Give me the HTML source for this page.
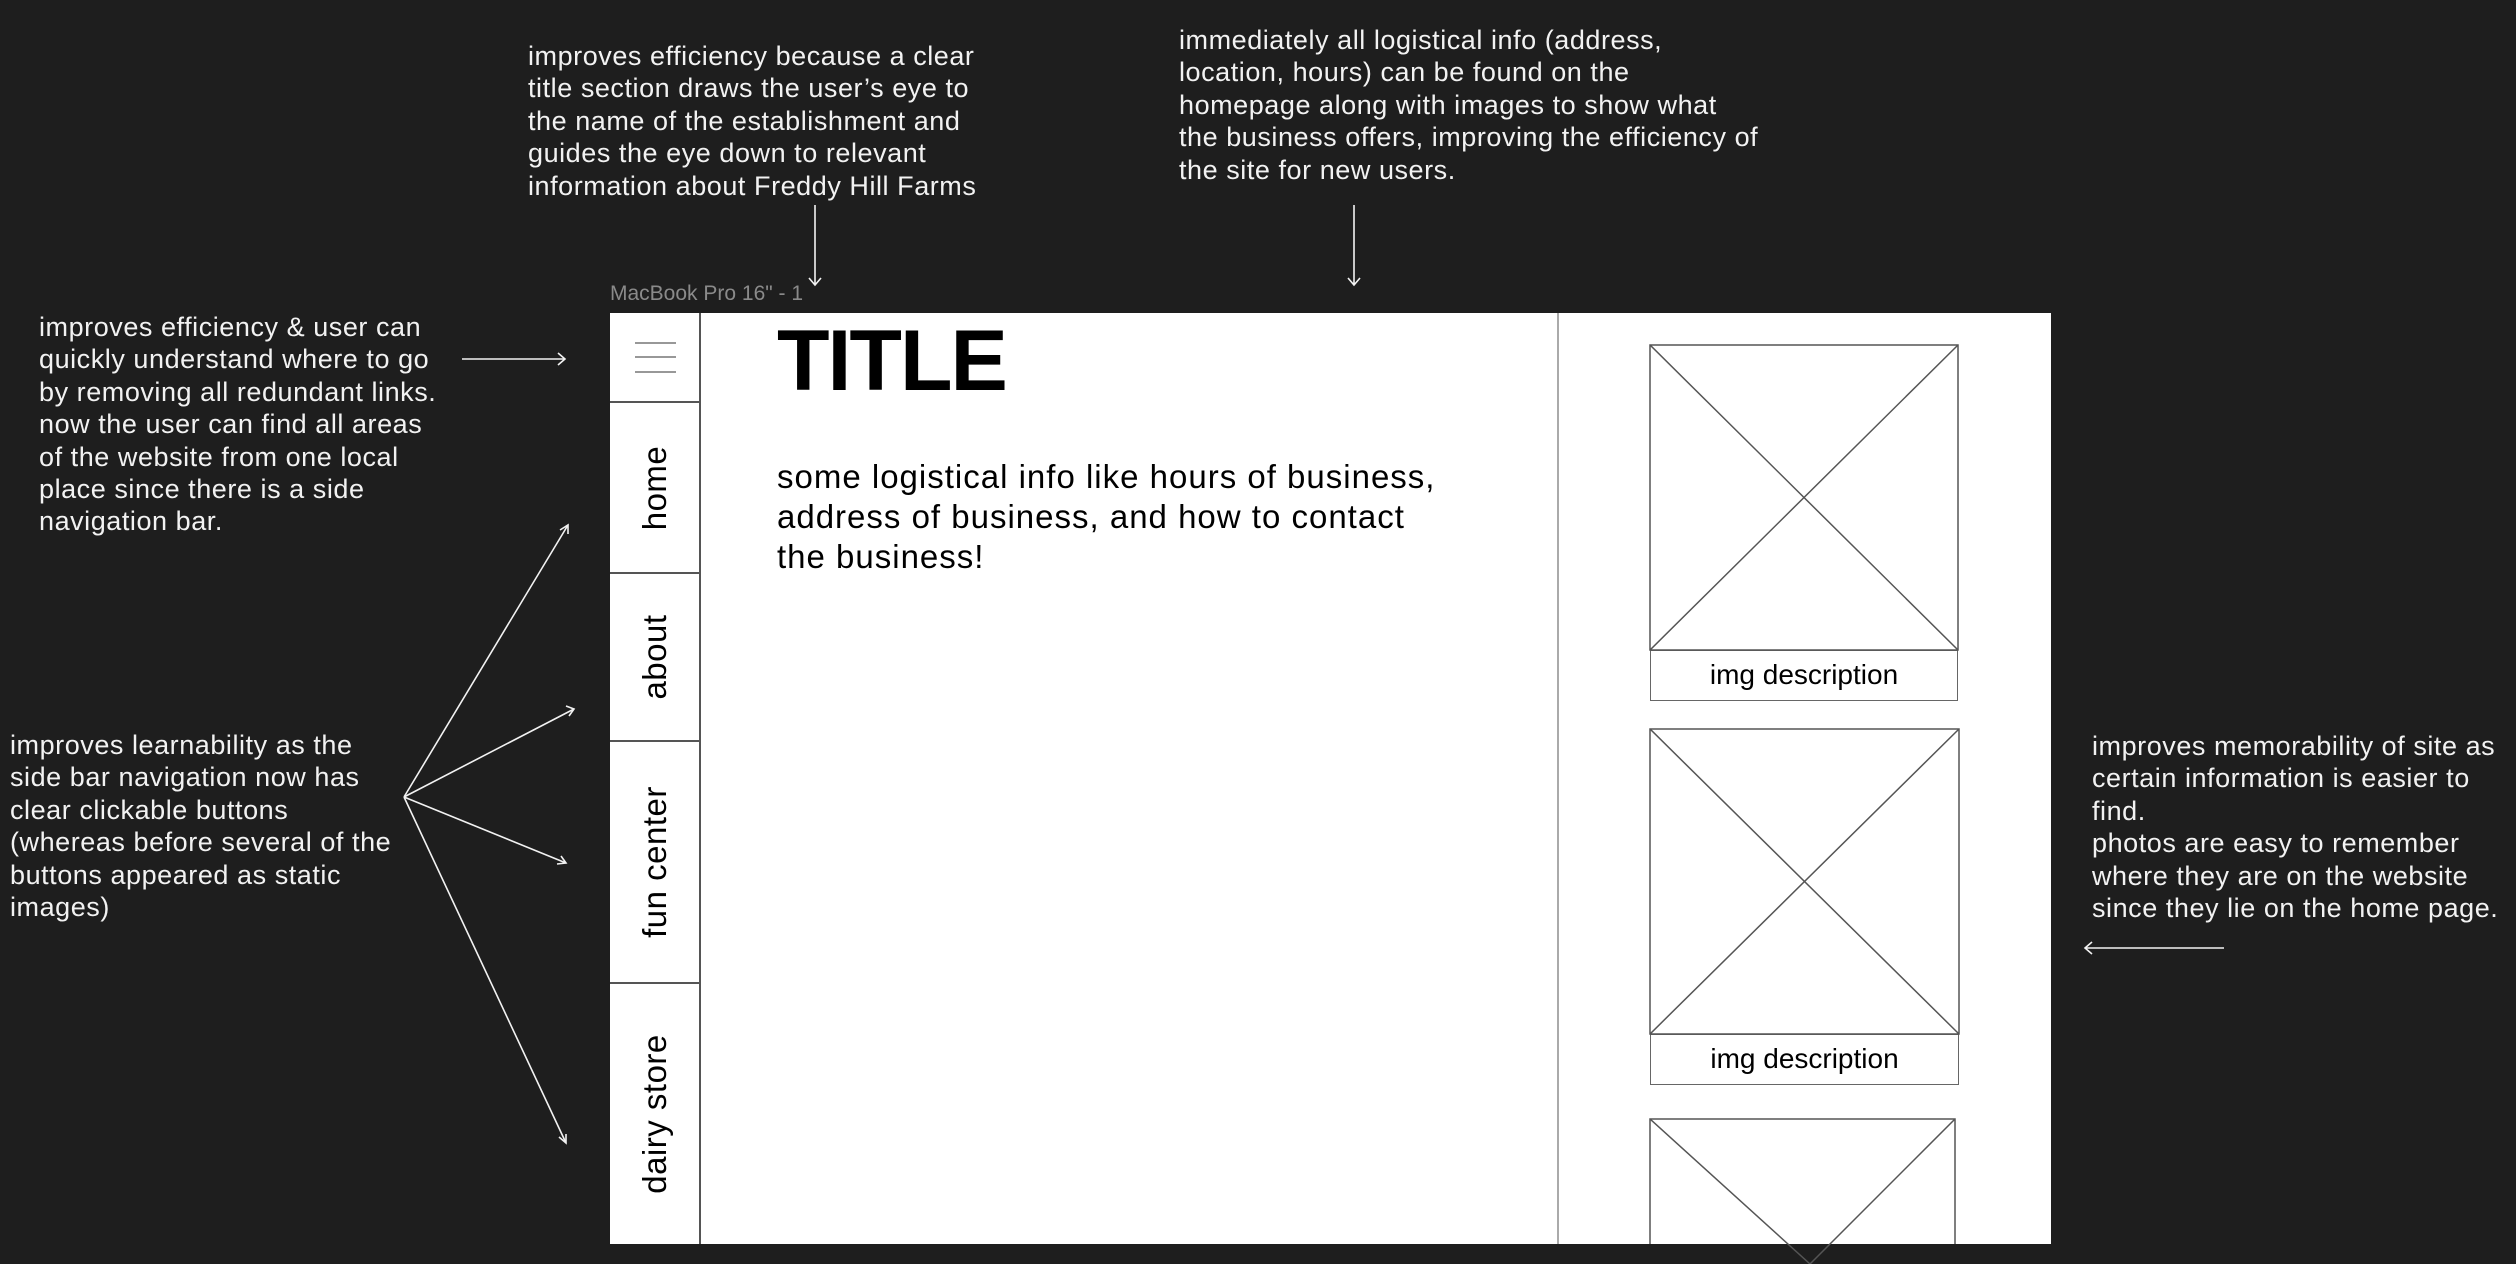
<!DOCTYPE html>
<html><head><meta charset="utf-8"><style>
html,body{margin:0;padding:0;background:#1e1e1e;width:2516px;height:1264px;overflow:hidden;position:relative;font-family:"Liberation Sans",sans-serif}
.a{position:absolute;color:#f2f2f2;font-size:27px;line-height:32.4px;white-space:nowrap;letter-spacing:0.55px}
.w{position:absolute;background:#fff}
.nav{position:absolute;left:610px;width:89px;background:#fff;border-bottom:2px solid #555;box-sizing:border-box}
.nav span{position:absolute;left:50%;top:50%;transform:translate(-50%,-50%) rotate(-90deg);font-size:33px;color:#000;white-space:nowrap;letter-spacing:0.5px}
.cap{position:absolute;border:1.5px solid #666;box-sizing:border-box;background:#fff;font-size:28px;text-align:center;color:#000}
</style></head><body>
<div class="a" style="left:528px;top:40px">improves efficiency because a clear<br>title section draws the user’s eye to<br>the name of the establishment and<br>guides the eye down to relevant<br>information about Freddy Hill Farms</div>
<div class="a" style="left:1179px;top:24px">immediately all logistical info (address,<br>location, hours) can be found on the<br>homepage along with images to show what<br>the business offers, improving the efficiency of<br>the site for new users.</div>
<div class="a" style="left:39px;top:311px">improves efficiency &amp; user can<br>quickly understand where to go<br>by removing all redundant links.<br>now the user can find all areas<br>of the website from one local<br>place since there is a side<br>navigation bar.</div>
<div class="a" style="left:10px;top:729px">improves learnability as the<br>side bar navigation now has<br>clear clickable buttons<br>(whereas before several of the<br>buttons appeared as static<br>images)</div>
<div class="a" style="left:2092px;top:730px">improves memorability of site as<br>certain information is easier to<br>find.<br>photos are easy to remember<br>where they are on the website<br>since they lie on the home page.</div>
<div style="position:absolute;left:610px;top:282px;font-size:21px;color:#8a8a8a">MacBook Pro 16" - 1</div>

<div class="w" style="left:700px;top:313px;width:857px;height:931px"></div>
<div class="w" style="left:1559px;top:313px;width:492px;height:931px"></div>
<div class="nav" style="top:313px;height:90px"></div>
<div class="nav" style="top:403px;height:171px"><span>home</span></div>
<div class="nav" style="top:574px;height:168px"><span>about</span></div>
<div class="nav" style="top:742px;height:242px"><span>fun center</span></div>
<div class="nav" style="top:984px;height:260px;border-bottom:none"><span>dairy store</span></div>
<div style="position:absolute;left:699px;top:313px;width:2px;height:931px;background:#555"></div>
<div style="position:absolute;left:1557px;top:313px;width:1.5px;height:931px;background:#aaa"></div>

<div style="position:absolute;left:777px;top:312px;font-size:86px;font-weight:bold;color:#000;letter-spacing:-2px">TITLE</div>
<div style="position:absolute;left:777px;top:457px;font-size:33px;line-height:40px;color:#000;white-space:nowrap;letter-spacing:1px">some logistical info like hours of business,<br>address of business, and how to contact<br>the business!</div>

<div class="cap" style="left:1650px;top:650px;width:308px;height:51px;line-height:47px">img description</div>
<div class="cap" style="left:1650px;top:1034px;width:309px;height:51px;line-height:47px">img description</div>

<svg width="2516" height="1264" style="position:absolute;left:0;top:0" fill="none">
<g stroke="#f2f2f2" stroke-width="1.6">
<path d="M815 205V285M809 278L815 285L821 278"/>
<path d="M1354 205V285M1348 278L1354 285L1360 278"/>
<path d="M462 359H565M558 353L565 359L558 365"/>
<path d="M404 797L568 525M404 797L574 709M404 797L566 863M404 797L566 1143"/>
<path d="M560 530L568 525L568 534M566 706L574 709L569 716M557 864L566 863L561 856M566 1134L566 1143L559 1137"/>
<path d="M2224 948H2085M2092 942L2085 948L2092 954"/>
</g>
<g stroke="#555" stroke-width="1.5">
<path d="M635 343H676M635 357H676M635 372H676" stroke="#777"/>
<rect x="1650" y="345" width="308" height="305"/>
<path d="M1650 345L1958 650M1958 345L1650 650"/>
<rect x="1650" y="729" width="309" height="305"/>
<path d="M1650 729L1959 1034M1959 729L1650 1034"/>
<path d="M1650 1244V1119H1955V1244"/>
<path d="M1650 1119L1810 1264M1955 1119L1810 1264"/>
</g>
</svg>
</body></html>
